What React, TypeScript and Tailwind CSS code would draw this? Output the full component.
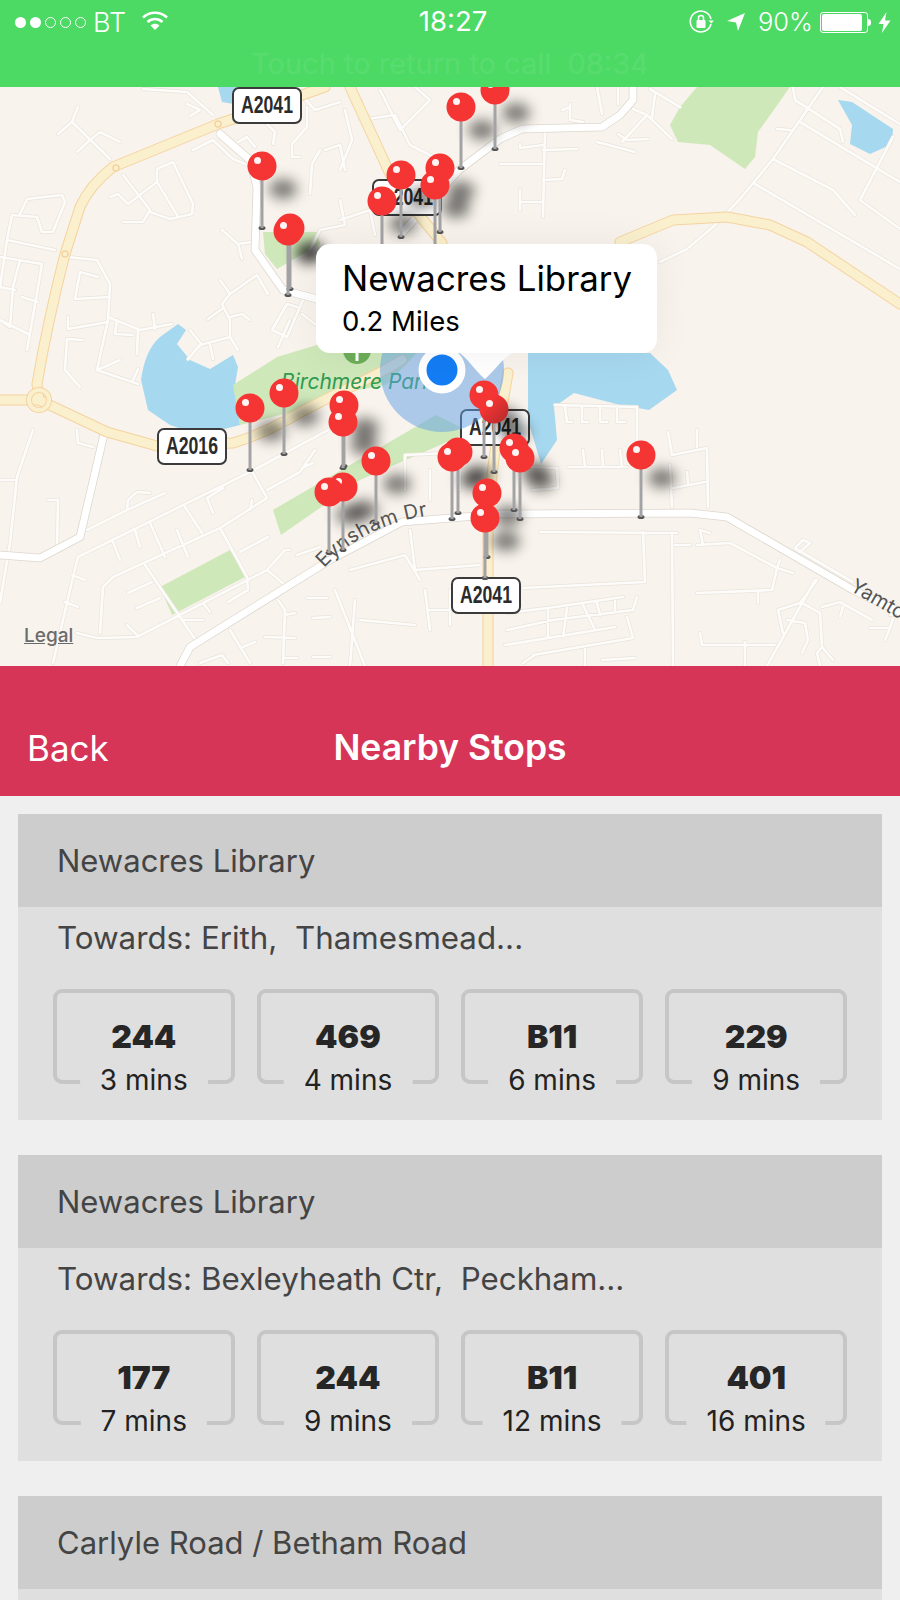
const pins = [
  { x: 495, y: 90, b: 149 },
  { x: 461, y: 107, b: 168 },
  { x: 262, y: 166, b: 228 },
  { x: 440, y: 168, b: 232 },
  { x: 401, y: 175, b: 237 },
  { x: 435, y: 185, b: 247 },
  { x: 382, y: 201, b: 263 },
  { x: 290, y: 228, b: 289 },
  { x: 288, y: 231, b: 295 },
  { x: 284, y: 393, b: 454 },
  { x: 484, y: 395, b: 457 },
  { x: 344, y: 405, b: 466 },
  { x: 250, y: 408, b: 470 },
  { x: 494, y: 409, b: 472, dark: true },
  { x: 343, y: 422, b: 468 },
  { x: 514, y: 448, b: 510 },
  { x: 458, y: 452, b: 513 },
  { x: 641, y: 455, b: 517 },
  { x: 452, y: 457, b: 519 },
  { x: 520, y: 458, b: 519 },
  { x: 376, y: 461, b: 523 },
  { x: 343, y: 487, b: 550 },
  { x: 329, y: 492, b: 553 },
  { x: 487, y: 493, b: 557 },
  { x: 485, y: 518, b: 578 },
]

const yellowRoads = [
  'M325 87 L233 119 L218 124 L113 167 Q90 185 80 207 L65 254 Q48 320 37 384 L39 400',
  'M0 400 L39 400 L107 432 L157 446 L233 443 C250 438 265 432 287 420 C330 395 370 380 402 360',
  'M350 87 L396 187 L442 243',
  'M620 242 L673 220 L727 217 L770 225 L807 242 L900 304',
  'M508 373 C500 420 490 470 488 527 L488 666',
]

const whiteMain = [
  'M900 612 L853 590 L727 517 L690 513 L500 514 L402 522 L330 560 L190 647 L180 666',
  'M633 87 L633 100 L620 115 L602 127 L522 129 L500 139 L459 170 L402 233',
  'M105 430 L80 537 L40 558 L0 555',
  'M220 134 L250 160 L257 187 L255 250 L283 290 L317 299',
]

const minorRoads = [
  // north west
  'M143 89 L187 92 L213 115 M187 104 L200 110 L190 116',
  'M78 107 L72 122 L110 159 M72 122 L58 134 M90 140 L77 152 M90 140 L100 132 L120 142',
  'M123 175 L150 210 L143 222 L123 222 M110 197 L118 194 L128 204 L157 182',
  'M157 182 L157 169 L173 162 L193 204 L192 214 L170 219 L150 212 M157 182 L177 215',
  'M7 240 L55 250 M20 214 L27 199 L62 195 L65 202 L53 232 L42 232 L37 217 L12 215 L7 240 L0 287',
  'M0 257 L42 264 L27 350 M20 260 L13 287 L10 327 L0 320 M0 287 L15 290 M22 297 L38 302 M0 320 L28 334',
  'M67 257 L97 260 L110 284 L108 320 L97 370 L138 384 M98 277 L80 272 L75 299 L110 297',
  'M68 317 V329 L108 322 M108 317 L140 330 L172 324 M117 320 L115 334 L133 335 M138 330 L137 354 M153 314 L155 329',
  'M83 340 L67 339 L65 370 L80 387 M97 370 L120 360 M138 369 L133 380',
  'M220 280 L230 294 L222 304 L230 320 L230 337 L200 345 L188 359 M208 319 L222 309 M230 317 L242 314 L250 320',
  'M230 294 L257 275 L268 294 M190 330 L202 345 M210 345 L213 359 M230 337 L238 350',
  'M222 230 L238 244 L252 242 M238 244 L242 259 M193 150 L213 140 L233 159 L248 165 M233 145 L247 137 L255 147',
  'M267 124 L275 132 L273 144 M307 107 L307 127 L292 144 L292 157 L300 157 M310 194 L312 164 L320 150',
  'M303 300 L287 337 L272 330 L287 304 L297 307 M302 314 L315 324 M290 320 L278 347',
  // north centre
  'M294 87 L315 110 L340 102 M345 110 L352 140 L340 170 M360 120 L395 115 L410 145 M325 150 L340 145 L345 170',
  'M380 90 L400 130 L430 100 L415 87 M410 145 L440 160 M340 200 L345 225 L320 230 L310 250 M340 220 L370 210 L375 235',
  'M597 87 L602 114 M618 87 L618 104 M570 104 L570 120 L583 122 M562 110 L570 107',
  'M633 109 L647 115 L672 139 M647 115 L622 142 M655 94 L652 117 M650 89 L680 107 M618 134 L627 140 L648 139 M597 142 L635 152',
  'M545 130 L543 217 M520 144 V148 L543 145 M543 150 L577 149 M543 180 L562 179 L565 170 M520 190 V210 M520 202 L543 202 M500 164 L543 164',
  // north east
  'M823 87 L773 159 L740 199 L713 227 L687 249 L660 262 M773 159 L833 190 L855 215 M755 184 L900 269',
  'M793 87 L795 100 L840 129 L843 142 M830 140 L800 122 M777 129 L790 130 M800 122 L900 182 M840 87 L900 124 M893 137 L860 200 L900 229',
  // south west
  'M33 430 L17 477 L10 543 L0 603 M0 480 L17 480 M48 500 L58 500 L57 547 M77 430 L78 443 L93 447',
  'M87 530 L127 510 L165 493 M127 510 L128 500 L137 492 L150 493',
  'M78 557 L250 472 L328 430 M78 557 L73 577 L53 663 M72 575 L85 580 M65 602 L78 607',
  'M100 633 L103 587 L113 577 L220 528 L267 498 L253 473 M267 490 L300 472 L315 450 M313 463 L302 468',
  'M113 542 L120 560 M135 530 L140 547 M150 523 L165 557 M177 530 L188 557 M185 507 L202 533 M207 498 L213 513 M207 498 L223 488 M250 510 L252 500',
  'M220 528 L247 577 L248 590 L228 602 M145 565 L197 642 M128 593 L152 582 M137 608 L160 598 M240 552 L268 537',
  'M77 633 L97 638 L137 637 L267 570 L285 550 L290 550 M267 570 L285 585 M297 555 L320 547 M127 625 L137 635 M203 603 L210 612 M183 620 L203 620',
  'M278 600 L285 610 L283 663 M285 615 L295 613 M265 637 L295 638 M285 658 L297 658 M230 630 L250 663 M243 647 L255 642 M200 663 L222 655 L228 663',
  'M307 598 L327 598 M313 618 L330 617 M313 657 L330 657',
  // south centre
  'M350 570 L405 555 L420 580 M335 590 L365 666 M355 600 L350 666 M360 620 L415 625 M410 530 L415 570 L480 565 M425 590 L430 630 M450 590 L450 625 M430 610 L480 610',
  'M405 455 L405 490 M405 455 L470 452 M430 470 L430 500 M460 470 L460 490',
  'M555 405 L637 407 L637 447 M565 407 L567 422 L572 422 M582 407 V422 L588 422 M600 407 V422 L607 422 M617 407 V422 L625 422',
  'M568 467 L627 467 M583 450 L585 467 M602 450 L603 467 M620 450 L622 467 M527 467 L557 468 L558 488 L533 490',
  'M668 432 L672 455 L707 448 L708 507 M697 430 V447 M670 465 L672 507 M673 488 L705 482 M687 472 L688 483',
  // south east
  'M540 532 L677 533 M643 532 L645 582 L523 588 M672 533 L673 666 M675 545 L690 545',
  'M697 545 L730 543 L777 568 L772 590 L697 593 M700 530 L710 533 M700 530 L703 545 M758 592 V603 M780 560 L777 568 L793 573',
  'M803 540 L810 543 L800 552 L795 548 Z M798 550 L853 582 M817 580 L800 603 L778 610 L783 633 M815 580 L767 666',
  'M787 620 L805 623 L808 640 L802 653 M802 603 L820 613 L822 647 L833 660 M822 647 L817 653 L820 666',
  'M822 607 L840 602 L872 620 M843 607 L840 617 M870 628 L890 628 L893 618 M890 628 L885 640 M890 615 L900 613',
  'M700 633 L702 645 L775 645 M745 642 V666',
  'M507 613 L548 608 L623 597 M507 630 L553 620 L633 610 L637 597 M505 645 L615 627 M533 655 L633 638 L627 617',
  'M548 610 L548 637 M567 608 L563 637 M583 605 L595 630 M597 603 L600 615 M615 598 V610 M523 663 L535 655 M585 648 V666 M602 660 L635 658',
]

export default function App() {
  return (
    <div className="h-[1600px] overflow-hidden bg-[#efeff0] font-['Inter',sans-serif]">
      <StatusBar />
      <MapArea />
      <div className="relative flex h-[130px] items-end justify-center bg-[#d63557] pb-[24px]">
        <span className="absolute bottom-[24px] left-[27px] text-[35px] leading-[48px] text-white">Back</span>
        <span className="text-[35.5px] font-semibold leading-[48px] text-white">Nearby Stops</span>
      </div>
      <div className="flex flex-col gap-[35px] px-[18px] pt-[18px]">
        <StopCard
          name="Newacres Library"
          towards="Towards: Erith,  Thamesmead..."
          buses={[
            { route: '244', mins: '3 mins' },
            { route: '469', mins: '4 mins' },
            { route: 'B11', mins: '6 mins' },
            { route: '229', mins: '9 mins' },
          ]}
        />
        <StopCard
          name="Newacres Library"
          towards="Towards: Bexleyheath Ctr,  Peckham..."
          buses={[
            { route: '177', mins: '7 mins' },
            { route: '244', mins: '9 mins' },
            { route: 'B11', mins: '12 mins' },
            { route: '401', mins: '16 mins' },
          ]}
        />
        <StopCard name="Carlyle Road / Betham Road" towards="" buses={[]} />
      </div>
    </div>
  )
}

function StatusBar() {
  return (
    <div className="relative z-10 flex h-[87px] flex-col bg-[#4cd964] text-white">
      <div className="flex h-[44px] items-center justify-between pl-[15px] pr-[9px]">
        <div className="flex w-[300px] items-center">
          <div className="flex gap-[4px]">
            <span className="h-[11px] w-[11px] rounded-full bg-white" />
            <span className="h-[11px] w-[11px] rounded-full bg-white" />
            <span className="h-[11px] w-[11px] rounded-full border border-white" />
            <span className="h-[11px] w-[11px] rounded-full border border-white" />
            <span className="h-[11px] w-[11px] rounded-full border border-white" />
          </div>
          <span className="ml-[7px] text-[27px] font-light leading-none">BT</span>
          <svg className="ml-[15px] -mt-[4px]" width="28" height="21" viewBox="0 0 28 21" fill="none" stroke="white" strokeWidth="2.6">
            <path d="M2 7.5 C9 1.2 19 1.2 26 7.5" />
            <path d="M6.5 12 C11 8 17 8 21.500 12" />
            <path d="M14 20 L9.500 15.500 C12 13.200 16 13.200 18.500 15.500 Z" fill="white" stroke="none" />
          </svg>
        </div>
        <span className="text-[27.5px] leading-none">18:27</span>
        <div className="flex w-[300px] items-center justify-end">
          <svg width="26" height="26" viewBox="0 0 26 26" fill="none" stroke="white" strokeWidth="1.6">
            <path d="M23 15 A10.500 10.500 0 1 1 23 10" />
            <path d="M20.500 11.500 L23.500 14.500 L25.800 11.500" fill="white" stroke="none" />
            <rect x="8.500" y="11" width="9" height="8" rx="1" fill="white" stroke="none" />
            <path d="M10.500 11 V9 A2.500 2.500 0 0 1 15.500 9 V11" />
          </svg>
          <svg className="ml-[12px]" width="20" height="20" viewBox="0 0 20 20">
            <path d="M19 1 L1 9 L10 10.500 L12 19 Z" fill="white" />
          </svg>
          <span className="ml-[12px] text-[25.5px] font-light leading-none">90%</span>
          <div className="ml-[7px] flex items-center">
            <div className="h-[21px] w-[48px] rounded-[3px] border border-white p-[1px]">
              <div className="h-full w-[90%] rounded-[2px] bg-white" />
            </div>
            <span className="h-[7px] w-[3px] rounded-r-full bg-white" />
          </div>
          <svg className="ml-[7px]" width="13" height="21" viewBox="0 0 13 21">
            <path d="M8.500 0 L0.500 12 H5.500 L4 21 L12.500 8.500 H7 Z" fill="white" />
          </svg>
        </div>
      </div>
      <div className="flex flex-1 justify-center pt-[2px]">
        <span className="whitespace-pre text-[29px] leading-[36px] text-white/[0.07]">Touch to return to call  08:34</span>
      </div>
    </div>
  )
}

function MapArea() {
  return (
    <div className="relative h-[579px] overflow-hidden bg-[#f8f3ec]">
      <svg className="block" width="900" height="579" viewBox="0 87 900 579" fontFamily="Inter, sans-serif">
        <defs>
          <filter id="pinBlur" x="-100%" y="-100%" width="300%" height="300%">
            <feGaussianBlur stdDeviation="6.500" />
          </filter>
          <linearGradient id="darkHead" x1="0" y1="0" x2="1" y2="1">
            <stop offset="0.3" stopColor="#f53434" />
            <stop offset="1" stopColor="#b02a2a" />
          </linearGradient>
        </defs>

        {/* water */}
        <g fill="#a6d8f0">
          <path d="M218 87 H238 L234 104 L222 102 Z" />
          <path d="M838 100 L852 102 L893 129 L892 144 L870 154 L850 144 L852 125 Z" />
          <path d="M178 324 L186 330 L177 344 L190 360 L210 369 L233 355 L238 367 L235 385 L240 425 L200 435 L170 425 L148 410 L141 380 Q145 350 160 337 Z" />
          <path d="M528 353 H650 L668 370 L677 390 L649 410 L620 405 L574 393 L554 407 L557 440 L541 464 L528 420 Z" />
        </g>

        {/* parks */}
        <g fill="#cfe8ba">
          <path d="M697 87 H790 L758 132 L755 157 L745 169 L710 145 L678 142 L670 125 L680 107 Z" />
          <path d="M263 232 H317 L320 244 L277 269 L265 254 Z" />
          <path d="M233 385 L277 357 L320 344 L400 342 L420 350 L386 385 L330 395 L300 410 L240 425 Z" />
          <path d="M273 510 L281 535 L360 480 L470 432 L436 415 L350 465 Z" />
          <path d="M160 587 L230 550 L245 577 L172 615 Z" />
        </g>

        {/* roads */}
        <g fill="none" strokeLinejoin="round" strokeLinecap="round">
          <path d={minorRoads.join(' ')} stroke="#e9e4db" strokeWidth="4" />
          <path d={minorRoads.join(' ')} stroke="#fdfcfa" strokeWidth="2.700" />
          <path d={whiteMain.join(' ')} stroke="#dcd7ce" strokeWidth="8.500" />
          <path d={whiteMain.join(' ')} stroke="#ffffff" strokeWidth="7" />
          <path d={yellowRoads.join(' ')} stroke="#f4d3a0" strokeWidth="11" />
          <path d={yellowRoads.join(' ')} stroke="#fbf0cd" strokeWidth="9" />
          <circle cx="39" cy="400" r="10" stroke="#f4d3a0" strokeWidth="6" />
          <circle cx="39" cy="400" r="10" stroke="#fbf0cd" strokeWidth="4" />
          <circle cx="218" cy="124" r="3" stroke="#f4d3a0" strokeWidth="1.500" />
          <circle cx="116" cy="168" r="3" stroke="#f4d3a0" strokeWidth="1.500" />
          <circle cx="65" cy="254" r="3" stroke="#f4d3a0" strokeWidth="1.500" />
        </g>

        {/* map labels */}
        <circle cx="357" cy="350" r="14" fill="#6dae58" />
        <rect x="355.500" y="352" width="3" height="9" fill="#ffffff" />
        <text x="281" y="389" fontSize="21" fontStyle="italic" fill="#2f9a50">Birchmere Park</text>
        <path id="eynshamPath" d="M324 568 C350 540 385 520 440 514" fill="none" />
        <text fontSize="20" fill="#555555" letterSpacing="0.5">
          <textPath href="#eynshamPath">Eynsham Dr</textPath>
        </text>
        <text x="849" y="590" fontSize="20" fill="#555555" transform="rotate(30 849 590)">Yamto</text>

        <Shield x={232} y={87} label="A2041" />
        <Shield x={372} y={179} label="A2041" />
        <Shield x={157} y={428} label="A2016" />
        <Shield x={460} y={409} label="A2041" />
        <Shield x={451} y={577} label="A2041" />

        {/* current location */}
        <circle cx="442" cy="370" r="62" fill="#5f9fe6" fillOpacity="0.5" />
        <circle cx="442" cy="370" r="23.500" fill="#ffffff" />
        <circle cx="442" cy="370" r="15.500" fill="#147df5" />

        {/* pin shadows */}
        <g fill="#000000" fillOpacity="0.5" filter="url(#pinBlur)">
          {pins.map((p, i) => (
            <ellipse key={i} cx={p.x + 21} cy={p.y + 23} rx="14" ry="10" />
          ))}
        </g>

        {pins.map((p, i) => (
          <g key={i}>
            <ellipse cx={p.x} cy={p.b} rx="3.500" ry="2" fill="#555555" />
            <rect x={p.x - 1.5} y={p.y} width="3" height={p.b - p.y} fill="#a3a3a6" />
            <circle cx={p.x} cy={p.y} r="14.500" fill={p.dark ? 'url(#darkHead)' : '#f53434'} />
            <circle cx={p.x - 4.500} cy={p.y - 5.500} r="3.500" fill="#ffffff" fillOpacity="0.95" />
          </g>
        ))}

        <path d="M458 352 H514 C502 358 496 370 485 379 C474 370 468 358 458 352 Z" fill="#ffffff" />
      </svg>

      <div className="absolute left-[316px] top-[157px] h-[109px] w-[341px] rounded-[14px] bg-white pl-[26px] pt-[13px] text-black shadow-[0_0_40px_rgba(0,0,0,0.06)]">
        <div className="text-[34.8px] leading-[42px]">Newacres Library</div>
        <div className="mt-[6px] text-[27.5px] leading-[32px]">0.2 Miles</div>
      </div>

      <span className="absolute left-[24px] top-[537px] text-[19px] font-medium leading-[24px] text-[#6b6b6b] underline">Legal</span>
    </div>
  )
}

function Shield({ x, y, label }: { x: number; y: number; label: string }) {
  return (
    <g>
      <rect x={x + 1} y={y + 1} width="68" height="35" rx="6" fill="#ffffff" stroke="#3b3b3b" strokeWidth="2" />
      <text
        x={x + 35}
        y={y + 26}
        textAnchor="middle"
        fontFamily="Liberation Sans, sans-serif"
        fontWeight="700"
        fontSize="23"
        textLength="52"
        lengthAdjust="spacingAndGlyphs"
        fill="#2b2b2b"
      >
        {label}
      </text>
    </g>
  )
}

interface Bus {
  route: string
  mins: string
}

function StopCard({ name, towards, buses }: { name: string; towards: string; buses: Bus[] }) {
  return (
    <div className="h-[306px] shrink-0 bg-[#dfdfdf]">
      <div className="flex h-[93px] items-center bg-[#cdcdcd] pl-[39px] pt-[1px] text-[31px] text-[#444444]">{name}</div>
      {towards && (
        <div className="whitespace-pre pl-[39px] pt-[12px] text-[31.3px] leading-[38px] text-[#444444]">{towards}</div>
      )}
      {buses.length > 0 && (
        <div className="mt-[32px] grid grid-cols-4 gap-[22.6px] px-[35px]">
          {buses.map((bus, i) => (
            <div key={i} className="relative h-[95px] rounded-[9px] border-[4px] border-[#c6c6c6] pt-[24px] text-center">
              <div className="text-[32px] font-black leading-[40px] text-[#262626]">{bus.route}</div>
              <span className="absolute -bottom-[17px] left-1/2 -translate-x-1/2 whitespace-nowrap bg-[#dfdfdf] px-[20px] text-[28px] leading-[34px] text-[#222222]">
                {bus.mins}
              </span>
            </div>
          ))}
        </div>
      )}
    </div>
  )
}
